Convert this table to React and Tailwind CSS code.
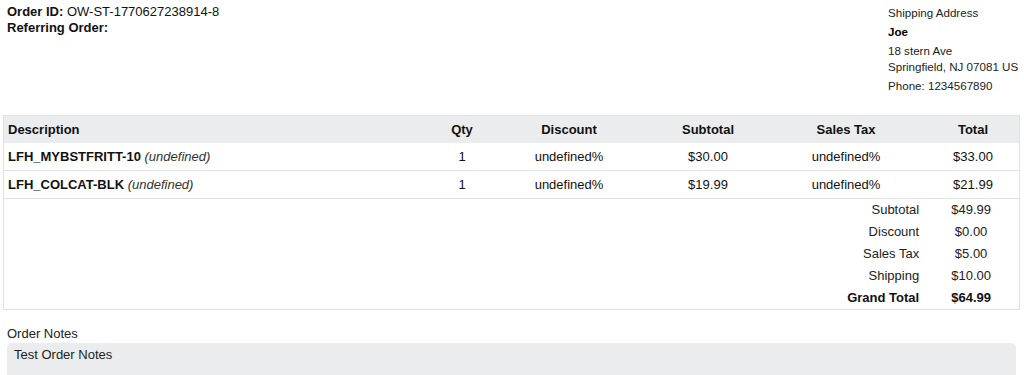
const items = [
  { sku: "LFH_MYBSTFRITT-10", qty: 1, discount: "undefined%", subtotal: "$30.00", tax: "undefined%", total: "$33.00" },
  { sku: "LFH_COLCAT-BLK", qty: 1, discount: "undefined%", subtotal: "$19.99", tax: "undefined%", total: "$21.99" },
];

const totals = [
  ["Subtotal", "$49.99"],
  ["Discount", "$0.00"],
  ["Sales Tax", "$5.00"],
  ["Shipping", "$10.00"],
];

const cols = "grid grid-cols-[431px_54px_160px_118px_158px_96px]";

export default function App() {
  return (
    <div className="w-[1024px] h-[375px] overflow-hidden bg-white text-[#111] font-['Liberation_Sans',Arial,sans-serif]">
      <div className="flex justify-between h-[115px] pl-[7px] pr-[6px]">
        <div className="pt-[4px] text-[13px] leading-[16px]">
          <div>
            <span className="font-bold">Order ID:</span> OW-ST-1770627238914-8
          </div>
          <div className="font-bold">Referring Order:</div>
        </div>
        <div className="w-[130px] pt-[5px] text-[11.6px] leading-[16px] text-[#222] whitespace-nowrap">
          <p className="mb-[3px]">Shipping Address</p>
          <p className="mb-[3px] font-bold text-black">Joe</p>
          <p className="mb-[3px]">
            18 stern Ave
            <br />
            Springfield, NJ 07081 US
          </p>
          <p>Phone: 1234567890</p>
        </div>
      </div>

      <div className="mx-[3px] w-[1017px] border border-[#dfe1e3] text-[13px]">
        <div className={`${cols} h-[27px] items-center bg-[#ebeced] font-bold`}>
          <div className="pl-[4px]">Description</div>
          <div className="text-center">Qty</div>
          <div className="text-center">Discount</div>
          <div className="text-center">Subtotal</div>
          <div className="text-center">Sales Tax</div>
          <div className="text-center">Total</div>
        </div>
        {items.map((it) => (
          <div key={it.sku} className={`${cols} h-[28px] items-center border-b border-[#dfe1e3]`}>
            <div className="pl-[4px]">
              <span className="font-bold">{it.sku}</span>{" "}
              <span className="italic text-[#333]">(undefined)</span>
            </div>
            <div className="text-center">{it.qty}</div>
            <div className="text-center">{it.discount}</div>
            <div className="text-center">{it.subtotal}</div>
            <div className="text-center">{it.tax}</div>
            <div className="text-center">{it.total}</div>
          </div>
        ))}
        <div className="flex flex-col">
          {totals.map(([label, value]) => (
            <div key={label} className="flex h-[22px] items-center">
              <div className="w-[921px] pr-[4px] text-right text-[#222]">{label}</div>
              <div className="w-[96px] text-center text-[#222]">{value}</div>
            </div>
          ))}
          <div className="flex h-[22px] items-center font-bold">
            <div className="w-[921px] pr-[4px] text-right">Grand Total</div>
            <div className="w-[96px] text-center">$64.99</div>
          </div>
        </div>
      </div>

      <div className="mt-[16px] px-[7px] text-[13px]">
        <div className="leading-[16px] text-[#222]">Order Notes</div>
        <div className="mt-[1px] w-[1009px] h-[50px] rounded-[5px] bg-[#ebeced] px-[7px] pt-[4px] leading-[15px] text-[#222]">
          Test Order Notes
        </div>
      </div>
    </div>
  );
}
